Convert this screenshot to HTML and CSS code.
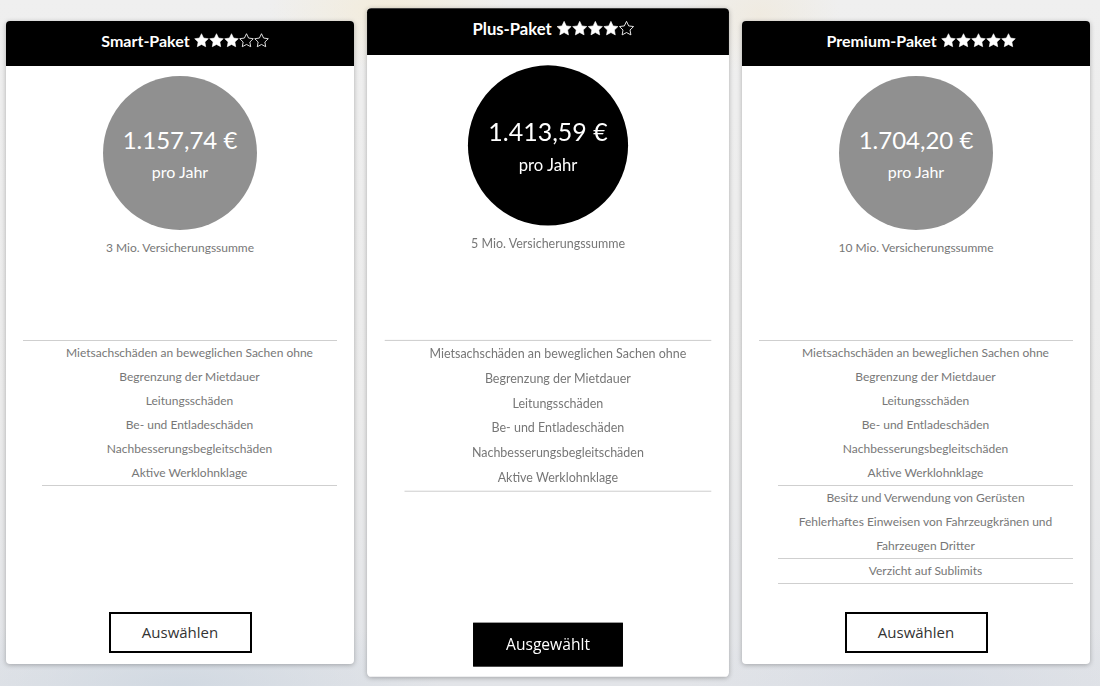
FILE: index.html
```html
<!DOCTYPE html>
<html lang="de">
<head>
<meta charset="utf-8">
<title>Pakete</title>
<link rel="stylesheet" href="styles.css">
</head>
<body>
<svg class="defs" width="0" height="0" aria-hidden="true">
  <defs>
    <symbol id="star" viewBox="1.5 1.5 21 21">
      <path d="M12 2.5l2.94 6.1 6.56.9-4.78 4.6 1.17 6.6L12 17.55 6.11 20.7l1.17-6.6L2.5 9.5l6.56-.9z"/>
    </symbol>
  </defs>
</svg>
<main class="plans">
  <section class="card">
    <header class="head">
      <span>Smart-Paket</span>
      <span class="stars">
        <svg class="star"><use href="#star"/></svg><svg class="star"><use href="#star"/></svg><svg class="star"><use href="#star"/></svg><svg class="star star--empty"><use href="#star"/></svg><svg class="star star--empty"><use href="#star"/></svg>
      </span>
    </header>
    <div class="circle">
      <div class="price">1.157,74 €</div>
      <div class="per">pro Jahr</div>
    </div>
    <p class="sum">3 Mio. Versicherungssumme</p>
    <div class="cover">
      <ul class="features">
        <li>Mietsachschäden an beweglichen Sachen ohne</li>
        <li>Begrenzung der Mietdauer</li>
        <li>Leitungsschäden</li>
        <li>Be- und Entladeschäden</li>
        <li>Nachbesserungsbegleitschäden</li>
        <li>Aktive Werklohnklage</li>
      </ul>
    </div>
    <button class="btn">Auswählen</button>
  </section>

  <section class="card card--selected">
    <header class="head">
      <span>Plus-Paket</span>
      <span class="stars">
        <svg class="star"><use href="#star"/></svg><svg class="star"><use href="#star"/></svg><svg class="star"><use href="#star"/></svg><svg class="star"><use href="#star"/></svg><svg class="star star--empty"><use href="#star"/></svg>
      </span>
    </header>
    <div class="circle circle--dark">
      <div class="price">1.413,59 €</div>
      <div class="per">pro Jahr</div>
    </div>
    <p class="sum">5 Mio. Versicherungssumme</p>
    <div class="cover">
      <ul class="features">
        <li>Mietsachschäden an beweglichen Sachen ohne</li>
        <li>Begrenzung der Mietdauer</li>
        <li>Leitungsschäden</li>
        <li>Be- und Entladeschäden</li>
        <li>Nachbesserungsbegleitschäden</li>
        <li>Aktive Werklohnklage</li>
      </ul>
    </div>
    <button class="btn btn--active">Ausgewählt</button>
  </section>

  <section class="card">
    <header class="head">
      <span>Premium-Paket</span>
      <span class="stars">
        <svg class="star"><use href="#star"/></svg><svg class="star"><use href="#star"/></svg><svg class="star"><use href="#star"/></svg><svg class="star"><use href="#star"/></svg><svg class="star"><use href="#star"/></svg>
      </span>
    </header>
    <div class="circle">
      <div class="price">1.704,20 €</div>
      <div class="per">pro Jahr</div>
    </div>
    <p class="sum">10 Mio. Versicherungssumme</p>
    <div class="cover">
      <ul class="features">
        <li>Mietsachschäden an beweglichen Sachen ohne</li>
        <li>Begrenzung der Mietdauer</li>
        <li>Leitungsschäden</li>
        <li>Be- und Entladeschäden</li>
        <li>Nachbesserungsbegleitschäden</li>
        <li>Aktive Werklohnklage</li>
      </ul>
      <ul class="extras">
        <li class="extras__item extras__item--open">Besitz und Verwendung von Gerüsten</li>
        <li class="extras__item">Fehlerhaftes Einweisen von Fahrzeugkränen und<br>Fahrzeugen Dritter</li>
        <li class="extras__item">Verzicht auf Sublimits</li>
      </ul>
    </div>
    <button class="btn">Auswählen</button>
  </section>
</main>
</body>
</html>
```

FILE: styles.css
```css
html, body {
  margin: 0;
  padding: 0;
}

body {
  width: 1100px;
  height: 686px;
  overflow: hidden;
  font-family: "Lato", "Open Sans", sans-serif;
  background:
    radial-gradient(ellipse 120px 60px at 390px 10px, rgba(245, 235, 210, 0.7), rgba(245, 235, 210, 0) 100%),
    radial-gradient(ellipse 80px 60px at 760px 15px, rgba(240, 232, 215, 0.6), rgba(240, 232, 215, 0) 100%),
    radial-gradient(ellipse 260px 80px at 180px 686px, rgba(205, 214, 224, 0.8), rgba(205, 214, 224, 0) 100%),
    radial-gradient(ellipse 240px 80px at 930px 686px, rgba(210, 216, 226, 0.7), rgba(210, 216, 226, 0) 100%),
    linear-gradient(to bottom, #efefef 0%, #ebebeb 60%, #e2e4e8 100%);
}

.defs {
  position: absolute;
  width: 0;
  height: 0;
}

.plans {
  display: flex;
  gap: 20px;
  padding: 21px 0 0 6px;
}

.card {
  width: 348px;
  height: 643px;
  box-sizing: border-box;
  background: #fff;
  border-radius: 4px;
  box-shadow: 0 1px 5px rgba(0, 0, 0, 0.28);
  display: flex;
  flex-direction: column;
}

.card--selected {
  transform: scale(1.04);
}

.head {
  height: 45px;
  flex: none;
  background: #000;
  border-radius: 4px 4px 0 0;
  color: #fff;
  display: flex;
  align-items: center;
  justify-content: center;
  gap: 4px;
  padding: 0 0 6px 10px;
  box-sizing: border-box;
  font-weight: 700;
  font-size: 16px;
}

.stars {
  display: flex;
  align-items: center;
}

.star {
  width: 15px;
  height: 15px;
  fill: #fff;
  stroke: #fff;
  stroke-width: 0.8;
  stroke-linejoin: round;
}

.star--empty {
  fill: none;
  stroke-width: 1.2;
}

.circle {
  width: 154px;
  height: 154px;
  flex: none;
  border-radius: 50%;
  background: #909090;
  margin: 10px auto 0;
  display: flex;
  flex-direction: column;
  align-items: center;
  justify-content: center;
  padding-top: 6px;
  box-sizing: border-box;
  color: #fff;
}

.circle--dark {
  background: #000;
}

.price {
  font-size: 24px;
  line-height: 32px;
}

.per {
  font-size: 16px;
  line-height: 32px;
}

.sum {
  margin: 11px 0 0;
  font-size: 12px;
  line-height: 14px;
  color: #777;
  text-align: center;
}

.cover {
  margin: 85px 17px 0;
  border-top: 1px solid #cfcfcf;
}

.features,
.extras {
  list-style: none;
  margin: 0 0 0 19px;
  padding: 0;
  font-size: 12px;
  line-height: 24px;
  color: #777;
  text-align: center;
}

.features {
  border-bottom: 1px solid #cfcfcf;
}

.extras__item {
  border-bottom: 1px solid #cfcfcf;
}

.extras__item--open {
  border-bottom: 0;
}

.btn {
  margin: auto auto 11px;
  width: 143px;
  height: 41px;
  flex: none;
  box-sizing: border-box;
  border: 2px solid #000;
  background: #fff;
  color: #333;
  font-family: "Open Sans", sans-serif;
  font-size: 15px;
  padding: 0 0 2px;
  cursor: pointer;
}

.btn--active {
  background: #000;
  color: #fff;
  width: 144px;
  height: 42px;
  margin-bottom: 10px;
}
```
